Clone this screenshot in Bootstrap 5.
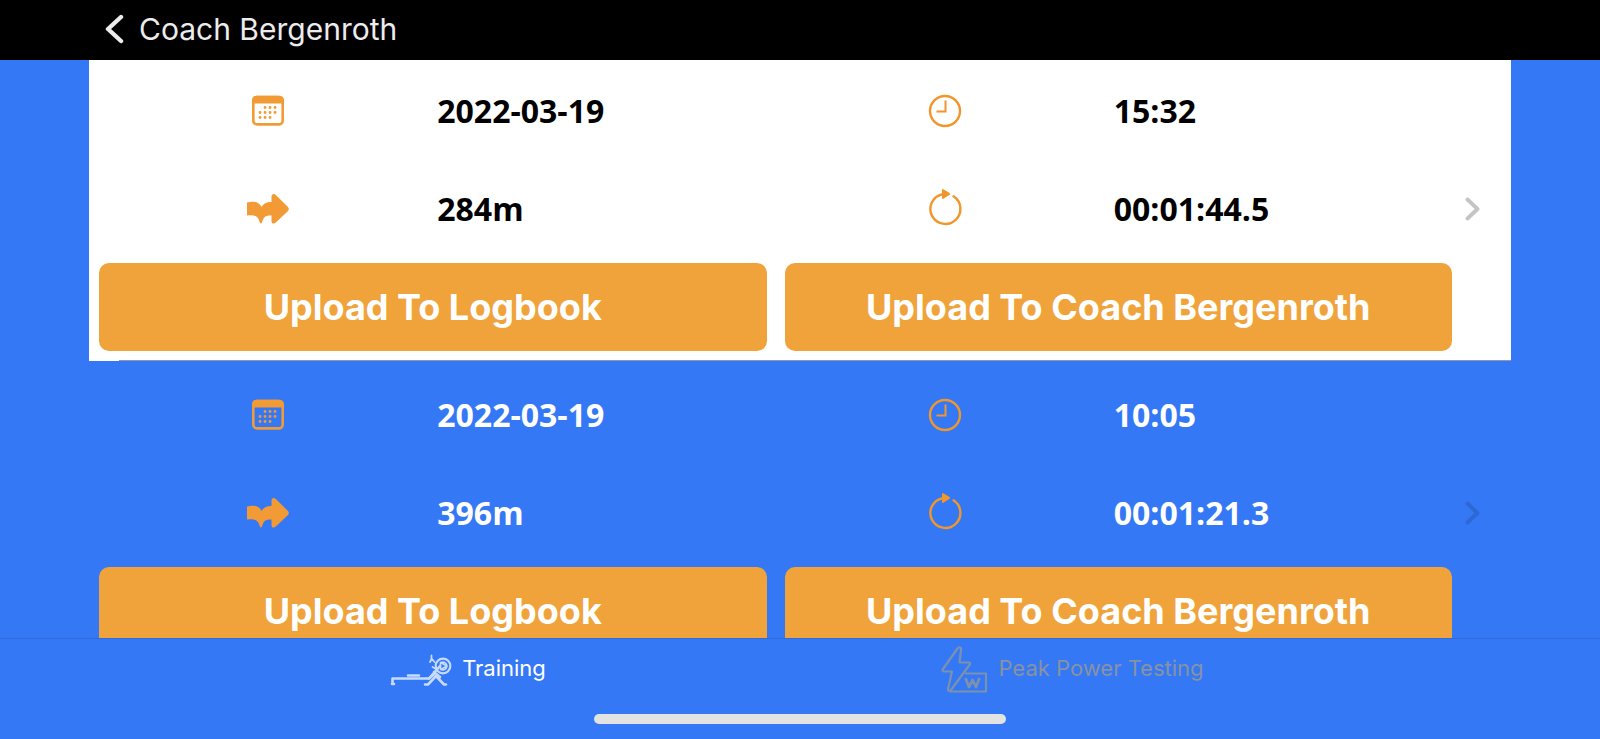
<!DOCTYPE html>
<html lang="en">
<head>
<meta charset="utf-8">
<meta name="viewport" content="width=device-width, initial-scale=1">
<title>Coach Bergenroth</title>
<link href="https://cdn.jsdelivr.net/npm/bootstrap@5.3.0/dist/css/bootstrap.min.css" rel="stylesheet">
<style>
  :root { --app-blue: #3478f6; --app-orange: #f0a33b; }
  body { background: var(--app-blue); font-family: Inter, Roboto, sans-serif; }
  .app-bar { height: 60px; padding: 0 104px; }
  .back-link { font-size: 30px; line-height: 58px; color: #ececec; gap: 15px; }
  .workouts { padding: 0 89px; min-height: 0; }
  /* the list is scrolled slightly under the app bar */
  .workout-list { margin-top: -3px; }
  .workout { height: 304px; color: #fff; flex-shrink: 0; position: relative; }
  .workout.selected { background: #fff; color: #000; }
  .workout.selected::after { content: ""; position: absolute; left: 30px; right: 0; bottom: 0; height: 1px; background: #8f96b4; }
  .workout-body { padding: 5px 9px 10px 10px; }
  .cell { height: 98px; }
  .value { font: 700 32px/44px "Open Sans", sans-serif; }
  .uploads { gap: 18px; margin-top: 5px; }
  .btn-upload { height: 88px; border: 0; border-radius: 10px; font-size: 36px; font-weight: 700; line-height: 44px; --bs-btn-color: #fff; --bs-btn-bg: var(--app-orange); --bs-btn-hover-color: #fff; --bs-btn-hover-bg: #e2952d; --bs-btn-active-color: #fff; --bs-btn-active-bg: #d98c24; flex: 1 1 0; }
  .more { width: 50px; padding-left: 3px; color: #2d68d3; }
  .selected .more { color: #c4c4c6; }
  .tab-bar { height: 101px; border-top: 1px solid #2f6bd9; background: var(--app-blue); }
  .tabs { padding: 0 226px 0 166px; height: 62px; }
  .tab-item { color: #8792a2; font-size: 22px; line-height: 58px; gap: 10px; flex: 1 1 0; }
  .tab-item.active { color: #fff; }
  .home-bar { width: 412px; height: 10px; background: #e3e3e3; margin-top: 13px; }
</style>
</head>
<body class="vh-100 d-flex flex-column overflow-hidden">
<svg class="d-none" xmlns="http://www.w3.org/2000/svg">
  <symbol id="calendar" viewBox="0 0 44 44">
    <rect x="7.300" y="8" width="29.400" height="27.400" rx="4" fill="none" stroke="#f19a36" stroke-width="2.600"/>
    <path d="M6 14.500v-3.500A4.500 4.500 0 0 1 10.500 6.700h23a4.500 4.500 0 0 1 4.500 4.500V14.500z" fill="#f19a36"/>
    <path d="M19 18.500h.1M24 18.500h.1M29 18.500h.1M14 23.500h.1M19 23.500h.1M24 23.500h.1M29 23.500h.1M14 28.500h.1M19 28.500h.1M24 28.500h.1" stroke="#f19a36" stroke-width="2.800" stroke-linecap="round"/>
  </symbol>
  <symbol id="distance" viewBox="0 0 44 44">
    <path d="M1 15.500C9 13.500 13.500 15.500 15.500 20C17.500 16.500 21 14.800 25.500 15V9.500C25.500 7 28 6.300 29.800 8L41.500 19.500C43.300 21.300 43.300 22.700 41.500 24.500L29.800 35.500C28 37.300 25.500 36.700 25.500 34.200V28.500C20 28 17.500 30 16.300 34.500C15.700 37 14.300 37 13.500 34.500C12 29.500 9 27.500 1 28.500Z" fill="#f19a36"/>
  </symbol>
  <symbol id="clock" viewBox="0 0 44 44">
    <circle cx="22" cy="22" r="15" fill="none" stroke="#f0962a" stroke-width="2.400"/>
    <path d="M22.500 11.500V22.500H13.500" fill="none" stroke="#f0962a" stroke-width="2"/>
  </symbol>
  <symbol id="duration" viewBox="0 0 44 44">
    <path d="M30.500 9.300A15 15 0 1 1 19.500 7.200" fill="none" stroke="#f0962a" stroke-width="2.400" stroke-linecap="round"/>
    <path d="M19 2.800Q19 1.400 20.400 2.200L26.600 6Q27.800 7 26.600 7.800L20.400 11.800Q19 12.400 19 11Z" fill="#f0962a"/>
  </symbol>
  <symbol id="chevron" viewBox="0 0 16 24">
    <path d="M3.500 2.500 13.500 12 3.500 21.500" fill="none" stroke="currentColor" stroke-width="3.800" stroke-linecap="round" stroke-linejoin="round"/>
  </symbol>
</svg>

<header class="app-bar bg-black flex-shrink-0">
  <a href="#" class="back-link d-inline-flex align-items-center text-decoration-none">
    <svg width="20" height="30" viewBox="0 0 20 30" aria-hidden="true"><path d="M17 3 4 15 17 27" fill="none" stroke="#ececec" stroke-width="4.400" stroke-linecap="round" stroke-linejoin="round"/></svg>
    <span>Coach Bergenroth</span>
  </a>
</header>

<main class="workouts flex-fill overflow-hidden">
  <div class="workout-list d-flex flex-column">
    <section class="workout selected d-flex align-items-center">
      <div class="workout-body flex-fill">
        <div class="row row-cols-4 g-0">
          <div class="cell col d-flex align-items-center justify-content-center"><svg width="44" height="44"><use href="#calendar"/></svg></div>
          <div class="cell col d-flex align-items-center"><span class="value">2022-03-19</span></div>
          <div class="cell col d-flex align-items-center justify-content-center"><svg width="44" height="44"><use href="#clock"/></svg></div>
          <div class="cell col d-flex align-items-center"><span class="value">15:32</span></div>
          <div class="cell col d-flex align-items-center justify-content-center"><svg width="44" height="44"><use href="#distance"/></svg></div>
          <div class="cell col d-flex align-items-center"><span class="value">284m</span></div>
          <div class="cell col d-flex align-items-center justify-content-center"><svg width="44" height="44"><use href="#duration"/></svg></div>
          <div class="cell col d-flex align-items-center"><span class="value">00:01:44.5</span></div>
        </div>
        <div class="uploads d-flex">
          <button type="button" class="btn btn-upload">Upload To Logbook</button>
          <button type="button" class="btn btn-upload">Upload To Coach Bergenroth</button>
        </div>
      </div>
      <a href="#" class="more d-flex flex-shrink-0" aria-label="Workout details"><svg width="16" height="24"><use href="#chevron"/></svg></a>
    </section>

    <section class="workout d-flex align-items-center">
      <div class="workout-body flex-fill">
        <div class="row row-cols-4 g-0">
          <div class="cell col d-flex align-items-center justify-content-center"><svg width="44" height="44"><use href="#calendar"/></svg></div>
          <div class="cell col d-flex align-items-center"><span class="value">2022-03-19</span></div>
          <div class="cell col d-flex align-items-center justify-content-center"><svg width="44" height="44"><use href="#clock"/></svg></div>
          <div class="cell col d-flex align-items-center"><span class="value">10:05</span></div>
          <div class="cell col d-flex align-items-center justify-content-center"><svg width="44" height="44"><use href="#distance"/></svg></div>
          <div class="cell col d-flex align-items-center"><span class="value">396m</span></div>
          <div class="cell col d-flex align-items-center justify-content-center"><svg width="44" height="44"><use href="#duration"/></svg></div>
          <div class="cell col d-flex align-items-center"><span class="value">00:01:21.3</span></div>
        </div>
        <div class="uploads d-flex">
          <button type="button" class="btn btn-upload">Upload To Logbook</button>
          <button type="button" class="btn btn-upload">Upload To Coach Bergenroth</button>
        </div>
      </div>
      <a href="#" class="more d-flex flex-shrink-0" aria-label="Workout details"><svg width="16" height="24"><use href="#chevron"/></svg></a>
    </section>
  </div>
</main>

<footer class="tab-bar flex-shrink-0">
  <nav class="tabs d-flex">
    <a href="#" class="tab-item active d-flex justify-content-center text-decoration-none" aria-current="page">
      <svg width="62" height="62" viewBox="0 0 62 62" fill="none" stroke="#c6dbff" stroke-width="2.600" stroke-linecap="round" stroke-linejoin="round" aria-hidden="true">
        <path d="M2.500 45V39.500H39L50 27M2 45H4M18 36.500H29" />
        <path d="M39 39.500 44 35M35 45.500H38L46 37M46 37 54 45.500H56M44 33 50 38"/>
        <path d="M41.500 16.500V20L40 23M42 20 44.500 23M42.500 28 46 30" stroke-width="1.800"/>
        <circle cx="53" cy="27" r="7.300" stroke-width="2.200"/>
        <path d="M50.500 23.500V30.500L57 27ZM50.500 23.500Q56 22 57 27Q56 32 50.500 30.500" stroke-width="1.600"/>
      </svg>
      <span>Training</span>
    </a>
    <a href="#" class="tab-item d-flex justify-content-center text-decoration-none">
      <svg width="48" height="62" viewBox="0 0 48 62" fill="none" stroke="#7b91ae" stroke-width="2.200" stroke-linejoin="round" aria-hidden="true">
        <path d="M19 8.500Q21.500 8 21 11L19.500 23.500H29Q31 23.500 29.800 25.500L11 51Q8.500 53.500 8 50L12 32.500H4Q1.500 32 3 30L17.500 9.500Q18 8.500 19 8.500Z"/>
        <path d="M25 34.500H46V52.500H10"/>
        <path d="M25.500 39 29 48 32.500 41 36 48 39.500 39" stroke-width="2.800"/>
      </svg>
      <span>Peak Power Testing</span>
    </a>
  </nav>
  <div class="home-bar rounded-pill mx-auto"></div>
</footer>
<script src="https://cdn.jsdelivr.net/npm/bootstrap@5.3.0/dist/js/bootstrap.bundle.min.js"></script>
</body>
</html>
